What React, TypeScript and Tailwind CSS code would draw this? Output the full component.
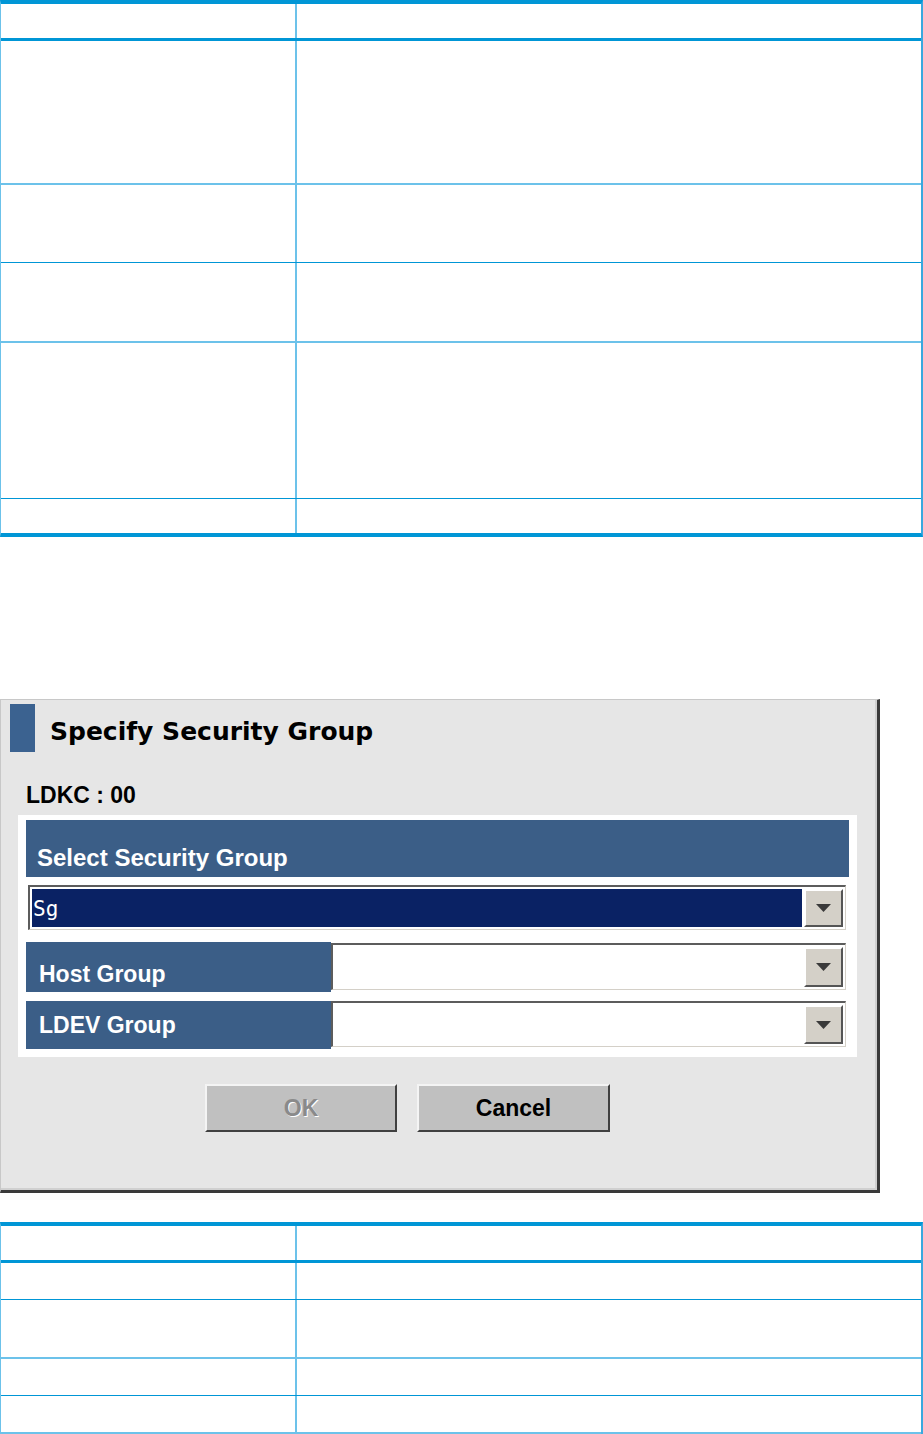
import React from "react";

const LINE: Record<string, string> = {
  head: "border-b-[3px] border-[#0096d6]",
  dark: "border-b border-[#0096d6]",
  light: "border-b-2 border-[#6cc2ea]",
  none: "",
};

function TRow({ h, line }: { h: string; line: string }) {
  return (
    <div className={`grid grid-cols-[296px_1fr] ${h} ${LINE[line]}`}>
      <div className="border-r-2 border-[#6cc2ea]" />
      <div />
    </div>
  );
}

function Arrow() {
  return (
    <div className="w-[39px] h-full bg-[#d4d0c8] border-t-2 border-l-2 border-white border-r-2 border-b-2 border-r-[#555555] border-b-[#555555] flex items-center justify-center">
      <svg width="17" height="10" viewBox="0 0 17 10">
        <polygon points="1,1 16,1 8.5,9" fill="#3a3a3a" />
      </svg>
    </div>
  );
}

function Combo({ selected, value }: { selected?: boolean; value?: string }) {
  return (
    <div className="h-full flex border-t-2 border-l-2 border-[#5c5c5c] border-r border-b border-r-[#d4d0c8] border-b-[#d4d0c8] bg-white p-[2px] gap-[2px]">
      <div
        className={`flex-1 flex items-center pl-[1px] ${
          selected ? "bg-[#0a2264] text-white" : "bg-white"
        }`}
      >
        {value && (
          <span className="mt-[3px] font-['DejaVu_Sans_Mono',monospace] text-[21px] leading-none">
            {value}
          </span>
        )}
      </div>
      <Arrow />
    </div>
  );
}

export default function App() {
  return (
    <div className="w-[923px] h-[1434px] bg-white overflow-hidden font-['Liberation_Sans',Arial,sans-serif]">
      {/* Top table */}
      <div className="w-[923px] border-t-4 border-b-4 border-[#0096d6] border-l border-l-[#6cc2ea] border-r-2 border-r-[#3aa8de]">
        <TRow h="h-[37px]" line="head" />
        <TRow h="h-[144px]" line="light" />
        <TRow h="h-[78px]" line="dark" />
        <TRow h="h-[80px]" line="light" />
        <TRow h="h-[156px]" line="dark" />
        <TRow h="h-[34px]" line="none" />
      </div>

      {/* Dialog */}
      <div className="mt-[162px] w-[880px] h-[494px] bg-[#e6e6e6] border-t border-l border-[#c8c8c8] border-r-[3px] border-b-[3px] border-r-[#3a3a3a] border-b-[#3a3a3a]">
        <div className="h-full border-r-2 border-b-2 border-[#d0d0d0] flex flex-col">
          <div className="mt-[4px] ml-[9px] flex items-start">
            <div className="w-[25px] h-[48px] bg-[#3b6290]" />
            <div className="ml-[15px] mt-[15px] font-['DejaVu_Sans',Verdana,sans-serif] font-bold text-[25px] leading-none text-black">
              Specify Security Group
            </div>
          </div>

          <div className="mt-[32px] ml-[25px] font-bold text-[23px] leading-none text-black">
            LDKC : 00
          </div>

          <div className="mt-[8px] ml-[17px] w-[839px] h-[242px] bg-white pt-[5px] px-[8px] flex flex-col">
            <div className="h-[57px] bg-[#3b5e87] flex items-end pb-[7px] pl-[11px]">
              <span className="text-white font-bold text-[24px] leading-none">
                Select Security Group
              </span>
            </div>

            <div className="mt-[8px] ml-[2px] mr-[3px] h-[45px]">
              <Combo selected value="Sg" />
            </div>

            <div className="mt-[12px] mr-[3px] h-[50px] flex">
              <div className="w-[305px] h-full bg-[#3b5e87] flex items-end pb-[6px] pl-[13px]">
                <span className="text-white font-bold text-[23px] leading-none">
                  Host Group
                </span>
              </div>
              <div className="flex-1 mt-[1px] h-[47px]">
                <Combo />
              </div>
            </div>

            <div className="mt-[9px] mr-[3px] h-[48px] flex">
              <div className="w-[305px] h-full bg-[#3b5e87] flex items-center pl-[13px]">
                <span className="text-white font-bold text-[23px] leading-none">
                  LDEV Group
                </span>
              </div>
              <div className="flex-1 h-[46px]">
                <Combo />
              </div>
            </div>
          </div>

          <div className="mt-[27px] ml-[204px] flex gap-[20px]">
            <div className="w-[192px] h-[48px] bg-[#c0c0c0] border-t-2 border-l-2 border-[#f4f4f4] border-r-2 border-b-2 border-r-[#404040] border-b-[#404040] flex items-center justify-center">
              <span className="font-bold text-[23px] leading-none text-[#8a8a8a] [text-shadow:1px_1px_0_#ffffff]">
                OK
              </span>
            </div>
            <div className="w-[193px] h-[48px] bg-[#c0c0c0] border-t-2 border-l-2 border-[#f4f4f4] border-r-2 border-b-2 border-r-[#404040] border-b-[#404040] flex items-center justify-center">
              <span className="font-bold text-[23px] leading-none text-black">
                Cancel
              </span>
            </div>
          </div>
        </div>
      </div>

      {/* Bottom table */}
      <div className="mt-[29px] w-[923px] border-t-4 border-[#0096d6] border-l border-l-[#6cc2ea] border-r-2 border-r-[#3aa8de]">
        <TRow h="h-[37px]" line="head" />
        <TRow h="h-[37px]" line="dark" />
        <TRow h="h-[59px]" line="light" />
        <TRow h="h-[37px]" line="dark" />
        <TRow h="h-[38px]" line="light" />
      </div>
    </div>
  );
}
